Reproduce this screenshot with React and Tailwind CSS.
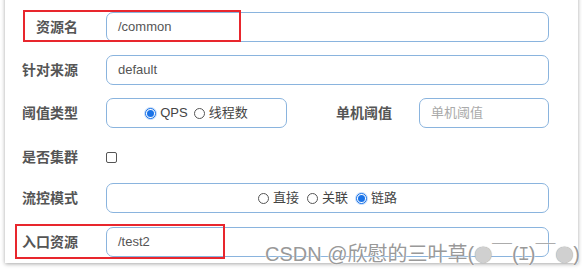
import React from "react";

const font = { fontFamily: '"Liberation Sans", Arial, "Noto Sans CJK SC", sans-serif' };

function Radio({ checked, label }) {
  return (
    <label className="flex items-center gap-[4px]">
      {checked ? (
        <span className="w-[11px] h-[11px] rounded-full border border-[#1a73e8] bg-white flex items-center justify-center shadow-[0_0_0_1px_rgba(26,115,232,0.25)]">
          <span className="w-[7px] h-[7px] rounded-full bg-[#1a73e8]" />
        </span>
      ) : (
        <span className="w-[11px] h-[11px] rounded-full border border-[#555] bg-white" />
      )}
      <span className="text-[13px] text-[#444]">{label}</span>
    </label>
  );
}

function Label({ children, className = "" }) {
  return (
    <div className={"text-right text-[14px] font-bold text-[#555] " + className}>{children}</div>
  );
}

function Input({ value, placeholder, className = "" }) {
  return (
    <div
      className={
        "h-[30px] border border-[#8ab4de] rounded-[7px] flex items-center pl-[11px] text-[13px] " +
        className
      }
    >
      {value ? (
        <span className="text-[#555]">{value}</span>
      ) : (
        <span className="text-[#aaa]">{placeholder}</span>
      )}
    </div>
  );
}

export default function App() {
  return (
    <div className="w-[582px] h-[276px] bg-white overflow-hidden relative" style={font}>
      <div className="ml-[5px] w-[573px] -mt-[10px] h-[273px] bg-white shadow-[0_1px_4px_rgba(0,0,0,0.35)] pl-[16px] pr-[29px] pt-[22px]">
        <div className="flex items-center h-[30px]">
          <Label className="w-[57px]">资源名</Label>
          <Input value="/common" className="ml-[28px] flex-1" />
        </div>
        <div className="flex items-center h-[30px] mt-[13px]">
          <Label className="w-[57px]">针对来源</Label>
          <Input value="default" className="ml-[28px] flex-1" />
        </div>
        <div className="flex items-center h-[30px] mt-[13px]">
          <Label className="w-[57px]">阈值类型</Label>
          <div className="ml-[28px] w-[181px] h-[30px] border border-[#8ab4de] rounded-[7px] flex items-center justify-center gap-[6px]">
            <Radio checked label="QPS" />
            <Radio label="线程数" />
          </div>
          <Label className="w-[105px]">单机阈值</Label>
          <Input placeholder="单机阈值" className="ml-[27px] flex-1" />
        </div>
        <div className="flex items-center h-[29px] mt-[15px]">
          <Label className="w-[57px]">是否集群</Label>
          <span className="ml-[28px] w-[11px] h-[11px] rounded-[2px] border border-[#555] bg-white" />
        </div>
        <div className="flex items-center h-[30px] mt-[11px]">
          <Label className="w-[57px]">流控模式</Label>
          <div className="ml-[28px] flex-1 h-[30px] border border-[#8ab4de] rounded-[7px] flex items-center justify-center gap-[8px]">
            <Radio label="直接" />
            <Radio label="关联" />
            <Radio checked label="链路" />
          </div>
        </div>
        <div className="flex items-center h-[30px] mt-[14px]">
          <Label className="w-[57px]">入口资源</Label>
          <Input value="/test2" className="ml-[28px] flex-1" />
        </div>
      </div>

      <div className="absolute left-[23px] top-[10px] w-[218px] h-[32px] border-2 border-[#e8262d]" />
      <div className="absolute left-[15px] top-[224px] w-[210px] h-[35px] border-2 border-[#e8262d]" />

      <div
        className="absolute left-[265px] top-[242px] text-[20px] leading-[24px] text-[#999] whitespace-nowrap flex items-center"
        style={{ ...font, textShadow: "0 0 2px #fff, 0 0 1px #fff" }}
      >
        <span>CSDN @欣慰的三叶草(</span>
        <span
          className="text-[16px] text-[#d0d0d0]"
          style={{ fontFamily: '"DejaVu Sans", sans-serif', textShadow: "0 0 1px #888" }}
        >
          ⬤
        </span>
        <span>￣(ｴ)￣</span>
        <span
          className="text-[16px] text-[#d0d0d0]"
          style={{ fontFamily: '"DejaVu Sans", sans-serif', textShadow: "0 0 1px #888" }}
        >
          ⬤
        </span>
        <span>)</span>
      </div>
    </div>
  );
}
